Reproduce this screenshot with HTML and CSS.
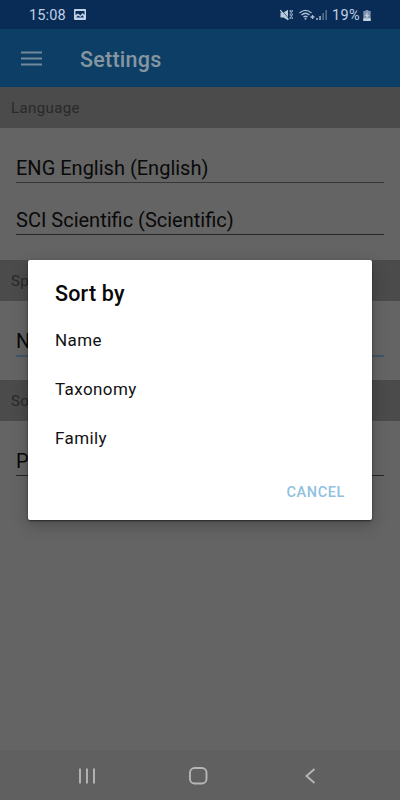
FILE: index.html
```
<!DOCTYPE html>
<html lang="en">
<head>
<meta charset="utf-8">
<title>Settings</title>
<link rel="stylesheet" href="styles.css">
</head>
<body>
<div class="screen">
  <header class="status">
    <span class="time">15:08</span>
    <svg class="photo" width="12" height="11" viewBox="0 0 12 11"><path fill="#c3d3ea" fill-rule="evenodd" d="M1 0h10a1 1 0 0 1 1 1v9a1 1 0 0 1-1 1H1a1 1 0 0 1-1-1V1a1 1 0 0 1 1-1zM1.500 2v4L4 4.500l2.500 2L8.500 4l2 2V2zM2 8.500h8L8.500 6.300 6.500 8 4 6.500z"/></svg>
    <span class="grow"></span>
    <svg class="mute" width="14" height="12" viewBox="0 0 14 12"><path fill="#b9c9dc" d="M.5 3.500h3L8 .8v10.400L3.500 8.500h-3z"/><path d="M1.200.8l8 9.200" stroke="#082c55" stroke-width=".8"/><path d="M.3 1.100l8.200 9.600" stroke="#b9c9dc" stroke-width="1.200"/><path d="M10.200 1v2m0 1.500v2m0 1.500v2M12.200 1v2m0 1.500v2m0 1.500v2M11.200 2.500v2m0 1.500v2" fill="none" stroke="#b9c9dc" stroke-width="1"/></svg>
    <svg class="wifi" width="16" height="12" viewBox="0 0 16 12"><g fill="none" stroke="#aebfd3" stroke-width="1.300"><path d="M.5 4Q6.500-1.200 12.500 4M2.500 6.100q4-3.600 8 0M4.500 8.100q2-1.800 4 0"/><path d="M11.500 8h4M13.500 6v4"/></g><circle cx="6.500" cy="9.800" r="1" fill="#aebfd3"/></svg>
    <svg class="signal" width="12" height="12" viewBox="0 0 12 12"><path fill="#a9bacf" d="M.3 9h1.500v2H.3zM3.300 7h1.500v4H3.300z"/><path fill="#59738f" d="M6.400 4h1.500v7H6.400zM9.400 1h1.500v10H9.400z"/></svg>
    <span class="percent">19%</span>
    <svg class="battery" width="8" height="11" viewBox="0 0 8 12"><path fill="#7f95ad" d="M2.500 0h3v1.200H8V12H0V1.200h2.500z"/><path fill="#c3d1df" d="M0 9h8v3H0zM4.800 2L1.600 6.500h2L3 10l3.400-4.600H4.300z"/></svg>
  </header>
  <div class="appbar">
    <svg width="21" height="15" viewBox="0 0 21 15"><path d="M0 1.500h21M0 7.500h21M0 13.500h21" stroke="#73899a" stroke-width="1.800"/></svg>
    <h1>Settings</h1>
  </div>
  <main>
    <h2>Language</h2>
    <section class="languages">
      <div class="field soft">ENG English (English)</div>
      <div class="field">SCI Scientific (Scientific)</div>
    </section>
    <h2>Sp</h2>
    <section><div class="field active">N</div></section>
    <h2>So</h2>
    <section><div class="field">P</div></section>
  </main>
  <nav>
    <svg class="recents" width="17" height="16" viewBox="0 0 17 16"><path d="M1 .5v15M8 .5v15M15 .5v15" stroke="#b5b5b5" stroke-width="1.900"/></svg>
    <svg class="home" width="19" height="18" viewBox="0 0 19 18"><rect x="1" y="1" width="16.500" height="15.500" rx="4.500" fill="none" stroke="#b5b5b5" stroke-width="1.900"/></svg>
    <svg class="back" width="11" height="16" viewBox="0 0 11 16"><path d="M9.500 1L1.500 8l8 7" fill="none" stroke="#b5b5b5" stroke-width="1.900"/></svg>
  </nav>
  <div class="dialog" role="dialog">
    <h3>Sort by</h3>
    <ul><li>Name</li><li>Taxonomy</li><li>Family</li></ul>
    <button>CANCEL</button>
  </div>
</div>
</body>
</html>
```
FILE: styles.css
```
* { box-sizing: border-box; }
body { margin: 0; font-family: Roboto, sans-serif; }
h1, h2, h3, ul { margin: 0; padding: 0; font-weight: 400; }
.screen { position: relative; display: flex; flex-direction: column; width: 400px; height: 800px; overflow: hidden; background: #646464; }
.status { display: flex; align-items: center; height: 29px; padding: 1px 29px 0 29px; background: #082c55; color: #c0cfe4; font-size: 14.500px; letter-spacing: .15px; }
.time { width: 45px; }
.photo { margin-top: -1px; }
.grow { flex: 1; }
.wifi { margin-left: 5px; }
.signal { margin-left: 1px; }
.percent { width: 30px; margin-left: 4px; white-space: nowrap; letter-spacing: .3px; }
.battery { margin-left: 1px; }
.appbar { display: flex; align-items: center; height: 58px; padding-left: 21px; background: #0d3f66; }
.appbar h1 { margin: 2px 0 0 38px; color: #8596a1; font-size: 21.500px; font-weight: 500; letter-spacing: .25px; }
main { flex: 1; }
h2 { height: 41px; padding-left: 11px; background: #4b4b4b; color: #292929; font-size: 15px; line-height: 42px; letter-spacing: .4px; }
section { height: 79px; padding: 26px 16px 0; }
.languages { height: 132px; }
.field { height: 29px; border-bottom: 1px solid #252525; color: #090909; font-size: 20px; line-height: 29px; }
.field + .field { margin-top: 23px; }
.soft { border-color: #363636; }
.active { height: 30px; border-bottom: 2px solid #3d5669; }
nav { display: flex; align-items: center; height: 50px; padding: 2px 0 0 79px; background: #606060; }
.home { margin-left: 93px; }
.back { margin-left: 97px; }
.dialog { position: absolute; left: 28px; top: 260px; display: flex; flex-direction: column; width: 344px; height: 259.500px; padding: 20px 27px 0; border-radius: 2px; background: #fff; box-shadow: 0 1px 2px rgba(0,0,0,.55), 0 5px 16px rgba(0,0,0,.25); }
.dialog h3 { color: #080808; font-size: 21.500px; font-weight: 500; line-height: 28px; letter-spacing: .2px; }
.dialog ul { margin-top: 8px; list-style: none; }
.dialog li { height: 49px; color: #111; font-size: 17px; line-height: 49px; letter-spacing: .4px; }
.dialog button { align-self: flex-end; margin-top: 20px; padding: 0; border: 0; background: none; color: #90c1e0; font: 500 14.500px/20px Roboto, sans-serif; letter-spacing: .6px; }
```
